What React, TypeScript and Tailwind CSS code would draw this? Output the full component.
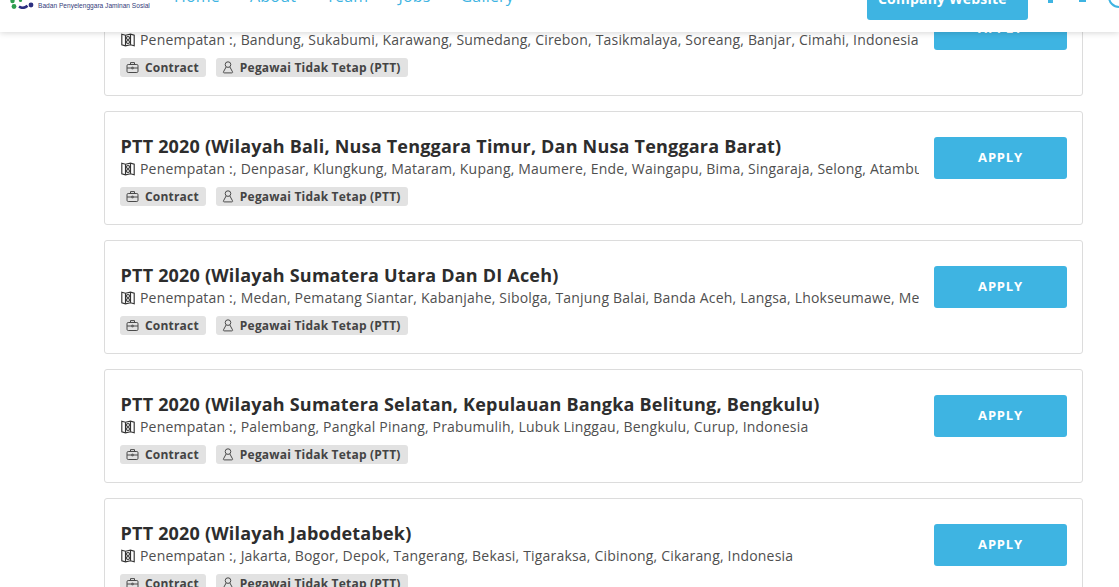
import React from "react";

const font = { fontFamily: '"Open Sans", sans-serif' };

function MapIcon() {
  return (
    <svg width="14" height="14" viewBox="0 0 14 14" fill="none" stroke="#333" strokeWidth="1.15" className="shrink-0">
      <path d="M.8 1.2 4.5 2.2 9.5 1.2 13.2 2.2V12.8L9.5 11.8 4.5 12.8.8 11.8z" />
      <path d="M4.5 2.2v10.6M9.5 1.2v10.6" />
      <circle cx="7" cy="5" r="1.5" />
      <circle cx="7" cy="9" r="1.5" />
    </svg>
  );
}

function BriefcaseIcon() {
  return (
    <svg width="13" height="13" viewBox="0 0 13 13" fill="none" stroke="#4a4a4a" strokeWidth="1" className="shrink-0">
      <rect x="1" y="3.5" width="11" height="8" rx="1.2" />
      <path d="M4.5 3.5V1.6h4v1.9M1 7h4.8M7.2 7H12M5.8 6.2h1.4v1.6H5.8z" />
    </svg>
  );
}

function UserIcon() {
  return (
    <svg width="12" height="13" viewBox="0 0 12 13" fill="none" stroke="#4a4a4a" strokeWidth="1" className="shrink-0">
      <circle cx="6" cy="3.6" r="2.8" />
      <path d="M4.1 6 1.5 10.8c-.3.6 0 1.1.6 1.1h7.8c.6 0 .9-.5.6-1.1L7.9 6" />
    </svg>
  );
}

function Tag({ icon, label }: { icon: React.ReactNode; label: string }) {
  return (
    <span className="flex h-[19px] items-center gap-[6px] rounded-[3px] bg-[#e2e2e2] pl-[6px] pr-[7px] text-[12px] font-bold tracking-[0.2px] text-[#444]">
      {icon}
      {label}
    </span>
  );
}

const jobs = [
  { title: "PTT 2020 (Wilayah Jawa Barat)", place: "Bandung, Sukabumi, Karawang, Sumedang, Cirebon, Tasikmalaya, Soreang, Banjar, Cimahi, Indonesia" },
  { title: "PTT 2020 (Wilayah Bali, Nusa Tenggara Timur, Dan Nusa Tenggara Barat)", place: "Denpasar, Klungkung, Mataram, Kupang, Maumere, Ende, Waingapu, Bima, Singaraja, Selong, Atambua, Indonesia" },
  { title: "PTT 2020 (Wilayah Sumatera Utara Dan DI Aceh)", place: "Medan, Pematang Siantar, Kabanjahe, Sibolga, Tanjung Balai, Banda Aceh, Langsa, Lhokseumawe, Meulaboh, Indonesia" },
  { title: "PTT 2020 (Wilayah Sumatera Selatan, Kepulauan Bangka Belitung, Bengkulu)", place: "Palembang, Pangkal Pinang, Prabumulih, Lubuk Linggau, Bengkulu, Curup, Indonesia" },
  { title: "PTT 2020 (Wilayah Jabodetabek)", place: "Jakarta, Bogor, Depok, Tangerang, Bekasi, Tigaraksa, Cibinong, Cikarang, Indonesia" },
];

function Card({ title, place }: { title: string; place: string }) {
  return (
    <div className="flex h-[114px] items-start rounded-[3px] border border-[#dcdcdc] bg-white pl-[15px] pr-[15px] pt-[22px]">
      <div className="min-w-0 flex-1 pr-[15px]">
        <h3 className="ml-[0.5px] h-[24px] whitespace-nowrap text-[18px] font-bold leading-[24px] tracking-[0.2px] text-[#2d2d2d]">{title}</h3>
        <div className="ml-[1px] mt-[1px] flex items-center gap-[5px] overflow-hidden whitespace-nowrap text-[14px] leading-[20px] tracking-[0.19px] text-[#4f4f4f]">
          <MapIcon />
          <span>Penempatan :, {place}</span>
        </div>
        <div className="mt-[8px] flex gap-[10px]">
          <Tag icon={<BriefcaseIcon />} label="Contract" />
          <Tag icon={<UserIcon />} label="Pegawai Tidak Tetap (PTT)" />
        </div>
      </div>
      <button className="mt-[3px] h-[42px] w-[133px] shrink-0 rounded-[3px] bg-[#3eb4e2] text-[13px] font-bold tracking-[0.8px] text-white">
        APPLY
      </button>
    </div>
  );
}

export default function App() {
  return (
    <div style={font} className="relative h-[587px] w-[1119px] overflow-hidden bg-white">
      <header className="absolute left-0 right-0 top-0 z-10 h-[32px] overflow-hidden bg-white shadow-[0_1px_6px_rgba(0,0,0,0.16)]">
        <div className="-mt-[20px] flex h-[40px] w-full items-center">
          <div className="ml-[10px] flex h-full w-[140px] shrink-0 items-end gap-[4px]">
            <svg width="24" height="14" viewBox="0 0 24 14" className="mb-[11px] shrink-0">
              <circle cx="2.5" cy="6" r="2.2" fill="#2e9e4f" />
              <circle cx="4" cy="11.5" r="2.4" fill="#2e9e4f" />
              <circle cx="10.5" cy="5.5" r="1.6" fill="#2e9e4f" />
              <path d="M9 11.5c3 2 6 1.5 8.5-.8" stroke="#2c2f80" strokeWidth="2.6" fill="none" />
              <circle cx="21" cy="10" r="2.4" fill="#2c2f80" />
            </svg>
            <span style={{ fontFamily: '"Liberation Sans", sans-serif' }} className="mb-[10px] whitespace-nowrap text-[6.6px] leading-[8px] text-[#33407a]">
              Badan Penyelenggara Jaminan Sosial
            </span>
          </div>
          <nav className="mb-[8px] ml-[24px] flex gap-[30px] text-[16px] leading-[22px] tracking-[0.2px] text-[#3eb4e2]">
            <span>Home</span>
            <span>About</span>
            <span>Team</span>
            <span>Jobs</span>
            <span>Gallery</span>
          </nav>
          <span className="ml-auto flex h-[40px] w-[161px] shrink-0 items-center rounded-[3px] bg-[#3eb4e2] pb-[4px] pl-[11px] text-[14px] font-bold tracking-[0.2px] text-white">
            Company Website
          </span>
          <svg width="91" height="40" viewBox="0 0 91 40" fill="none" className="shrink-0">
            <rect x="20" y="20" width="5" height="3" fill="#3eb4e2" />
            <path d="M51 21h7" stroke="#3eb4e2" strokeWidth="2" />
            <circle cx="91" cy="17" r="10" stroke="#3eb4e2" strokeWidth="2" />
          </svg>
        </div>
      </header>
      <main className="-mt-[18px] flex flex-col gap-[15px] pl-[104px] pr-[36px]">
        {jobs.map((j) => (
          <Card key={j.title} title={j.title} place={j.place} />
        ))}
      </main>
    </div>
  );
}
